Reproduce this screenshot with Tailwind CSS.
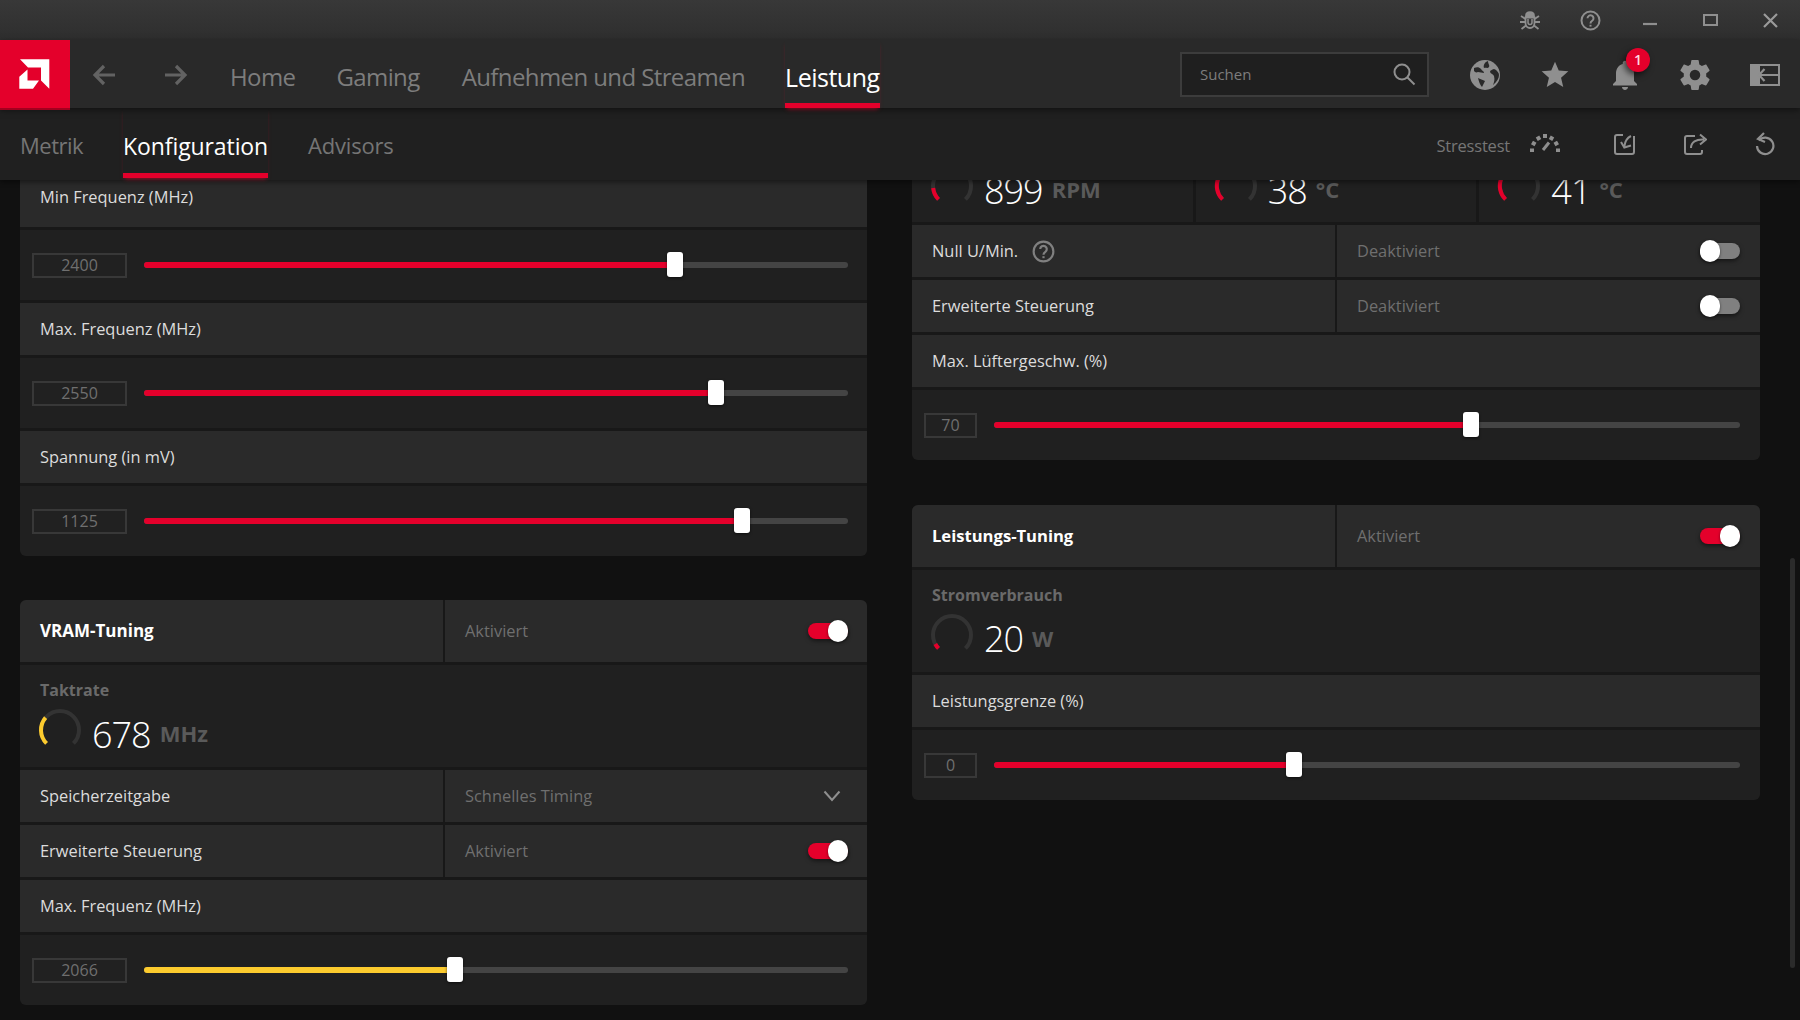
<!DOCTYPE html>
<html lang="de">
<head>
<meta charset="utf-8">
<script src="https://cdn.jsdelivr.net/npm/@tailwindcss/browser@4"></script>
<title>Leistung</title>
</head>
<body class="m-0 bg-[#111111]">
<div class="w-[1800px] h-[1020px] overflow-hidden flex flex-col font-['Open_Sans',sans-serif] text-[#dcdcdc]">

  <!-- title bar -->
  <div class="h-[40px] shrink-0 flex justify-end bg-gradient-to-b from-[#383838] to-[#2e2e2e] text-[#8f8f8f]">
    <div class="w-[60px] flex items-center justify-center">
      <svg width="22" height="22" viewBox="0 0 22 22" fill="none" stroke="#8f8f8f" stroke-width="1.8"><path d="M7 7c0-5 8-5 8 0z" fill="#8f8f8f"/><path d="M6.500 8.500h9v5.500a4.500 5 0 0 1-9 0z"/><path d="M9 10v3.500a2 2 0 0 0 4 0V10" stroke-width="1.5"/><path d="M2 7l4.500 3M20 7l-4.500 3M1 13h5.500M21 13h-5.500M2.500 20l4.500-3.500M19.500 20L15 16.500"/></svg>
    </div>
    <div class="w-[60px] flex items-center justify-center">
      <svg width="21" height="21" viewBox="0 0 21 21" fill="none" stroke="#8f8f8f" stroke-width="2"><circle cx="10.500" cy="10.500" r="9"/><path d="M7.500 8.300a3 3 0 1 1 4.700 2.500c-1.200.8-1.700 1.300-1.700 2.600"/><path d="M10.500 14.800v1.800"/></svg>
    </div>
    <div class="w-[60px] flex items-center justify-center">
      <svg width="16" height="14" viewBox="0 0 16 14" class="translate-y-[1px]"><path d="M1 10h14" stroke="#8f8f8f" stroke-width="2.200"/></svg>
    </div>
    <div class="w-[60px] flex items-center justify-center">
      <div class="w-[15px] h-[12px] border-2 border-[#8f8f8f]"></div>
    </div>
    <div class="w-[60px] flex items-center justify-center">
      <svg width="15" height="15" viewBox="0 0 15 15"><path d="M1 1l13 13M14 1L1 14" stroke="#9a9a9a" stroke-width="2.200"/></svg>
    </div>
  </div>

  <!-- main nav -->
  <div class="h-[68px] shrink-0 flex bg-[#292929] relative z-30 shadow-[0_2px_6px_rgba(0,0,0,0.5)]">
    <div class="w-[70px] h-[70px] shrink-0 bg-[#e4002b] border-b-2 border-[#a3001f] relative z-10">
      <svg width="70" height="68" viewBox="0 0 70 68" class="block"><path d="M20 23.300h29.300v29.400L41 44.500V31.500H28zM19.300 40.700l8.200-7.200v11H39l-6 8.200H19.300z" fill="#fff" transform="translate(0 -4)"/></svg>
    </div>
    <svg width="24" height="24" viewBox="0 0 24 24" fill="none" stroke="#626262" stroke-width="3.200" class="ml-[22px] mt-[23px]"><path d="M23 12H3M12 3l-9 9 9 9"/></svg>
    <svg width="24" height="24" viewBox="0 0 24 24" fill="none" stroke="#626262" stroke-width="3.200" class="ml-[48px] mt-[23px]"><path d="M1 12h20M12 3l9 9-9 9"/></svg>
    <div class="ml-[42px] flex h-full text-[24px] text-[#7d7d7d] tracking-[-0.6px]">
      <div class="flex items-center pt-[10px] border-b-[5px] border-transparent">Home</div>
      <div class="ml-[41px] flex items-center pt-[10px] border-b-[5px] border-transparent">Gaming</div>
      <div class="ml-[42px] flex items-center pt-[10px] border-b-[5px] border-transparent">Aufnehmen und Streamen</div>
      <div class="ml-[40px] flex items-center pt-[13px] border-b-[5px] border-[#e4002b] text-white font-medium text-[25px] tracking-[-0.5px] shadow-[0_3px_4px_-2px_rgba(228,0,43,0.6)]">Leistung</div>
    </div>
    <div class="ml-auto flex items-center">
      <div class="w-[249px] h-[45px] mr-[21px] border-2 border-[#3c3c3c] bg-[#1f1f1f] flex items-center justify-between pl-[18px] pr-[11px] text-[15px] text-[#7d7d7d]">
        <span>Suchen</span>
        <svg width="24" height="24" viewBox="0 0 24 24" fill="none" stroke="#8f8f8f" stroke-width="2"><circle cx="10" cy="10" r="7.500"/><path d="M15.500 15.500L22.500 22.500"/></svg>
      </div>
      <div class="w-[70px] flex justify-center pt-[2px]">
        <svg width="32" height="32" viewBox="0 0 32 32"><circle cx="16" cy="16" r="15" fill="#8f8f8f"/><path d="M5 9c3-1 5-1 7 1 1 2 3 2 3 4-2 0-4-1-6-1-2 1-3 0-4-1zM19 2c0 3 2 4 1 6-2 2-3 0-5 1-1-3 1-6 4-7zM25 10c-2 1-4 1-4 3 1 2 3 2 4 4 1 4 0 6-1 9 4-3 6-7 6-10 0-2-2-5-5-6zM13 28l3-6c-2-1-5-2-7-3 1 4 2 7 4 9z" fill="#292929"/></svg>
      </div>
      <div class="w-[70px] flex justify-center pt-[2px]">
        <svg width="32" height="32" viewBox="0 0 24 24"><path d="M12 17.270L18.180 21l-1.640-7.030L22 9.240l-7.190-.610L12 2 9.190 8.630 2 9.240l5.460 4.730L5.820 21z" fill="#8f8f8f"/></svg>
      </div>
      <div class="w-[70px] flex justify-center relative pt-[2px]">
        <svg width="36" height="36" viewBox="0 0 24 24"><path d="M12 22c1.100 0 2-.9 2-2h-4c0 1.100.9 2 2 2zm6-6v-5c0-3.070-1.630-5.640-4.500-6.320V4c0-.83-.67-1.500-1.500-1.500s-1.500.67-1.500 1.500v.68C7.640 5.360 6 7.920 6 11v5l-2 2v1h16v-1l-2-2z" fill="#8f8f8f"/></svg>
        <div class="absolute left-[36px] top-[-7px] w-[24px] h-[24px] rounded-full bg-[#e4002b] shadow-[-2px_3px_6px_rgba(0,0,0,0.6)] flex items-center justify-center text-[14px] leading-none font-semibold text-[#ffd9e0]">1</div>
      </div>
      <div class="w-[70px] flex justify-center pt-[2px]">
        <svg width="36" height="36" viewBox="0 0 24 24"><path d="M12 15.500A3.500 3.500 0 0 1 8.500 12 3.500 3.500 0 0 1 12 8.500a3.500 3.500 0 0 1 3.500 3.500 3.500 3.500 0 0 1-3.500 3.500m7.430-2.530c.04-.32.07-.64.07-.97 0-.33-.03-.66-.07-1l2.110-1.630c.19-.15.24-.42.12-.64l-2-3.460c-.12-.22-.39-.31-.61-.22l-2.490 1c-.52-.39-1.060-.73-1.690-.98l-.37-2.650A.506.506 0 0 0 14 2h-4c-.25 0-.46.18-.5.42l-.37 2.650c-.63.25-1.170.59-1.690.98l-2.490-1c-.22-.09-.49 0-.61.22l-2 3.460c-.13.22-.07.49.12.64L4.570 11c-.04.34-.07.67-.07 1 0 .33.03.65.07.97l-2.110 1.660c-.19.15-.25.42-.12.64l2 3.460c.12.22.39.3.61.22l2.490-1.010c.52.4 1.060.74 1.690.99l.37 2.650c.04.24.25.42.5.42h4c.25 0 .46-.18.5-.42l.37-2.650c.63-.26 1.170-.59 1.690-.99l2.490 1.010c.22.08.49 0 .61-.22l2-3.460c.12-.22.07-.49-.12-.64l-2.110-1.660z" fill="#8f8f8f"/></svg>
      </div>
      <div class="w-[70px] flex justify-center pt-[2px]">
        <svg width="30" height="22" viewBox="0 0 30 22"><path d="M0 0h30v22H0z" fill="#8f8f8f"/><path d="M10 2h18v18H10z" fill="#292929"/><path d="M14.500 5l-5.500 6 5.500 6M9.500 11H30" fill="none" stroke="#8f8f8f" stroke-width="2.200"/></svg>
      </div>
    </div>
  </div>

  <!-- sub nav -->
  <div class="h-[72px] shrink-0 flex bg-[#202020] relative z-20 shadow-[0_2px_5px_rgba(0,0,0,0.45)]">
    <div class="ml-[20px] flex h-[70px] text-[22px] text-[#757575] tracking-[-0.5px]">
      <div class="flex items-center pt-[9px] border-b-[5px] border-transparent">Metrik</div>
      <div class="ml-[40px] flex items-center pt-[12px] border-b-[5px] border-[#e4002b] text-white font-medium text-[23px] tracking-[-0.1px] shadow-[0_3px_4px_-2px_rgba(228,0,43,0.6)]">Konfiguration</div>
      <div class="ml-[40px] flex items-center pt-[9px] border-b-[5px] border-transparent tracking-[-0.2px]">Advisors</div>
    </div>
    <div class="ml-auto flex items-center text-[#767676]">
      <span class="text-[16.5px] tracking-[-0.2px] pt-[5px]">Stresstest</span>
      <div class="w-[70px] mr-[10px] flex justify-center mb-[5px]">
        <svg width="32" height="20" viewBox="0 0 32 20" fill="none" stroke="#8f8f8f" stroke-width="4"><path d="M1 18.500h4M27 18.500h4M3 10.500l3.500 2M29 10.500l-3.500 2M8.500 4.500l2 3.500M16 2v4M23.500 4.500l-2 3.500" /><path d="M14 18l6-7.500" stroke-width="3"/></svg>
      </div>
      <div class="w-[70px] flex justify-center">
        <svg width="22" height="24" viewBox="0 0 22 24" fill="none" stroke="#8f8f8f" stroke-width="2"><path d="M9 3H3a2 2 0 0 0-2 2v15a2 2 0 0 0 2 2h15a2 2 0 0 0 2-2V4"/><path d="M17 4c-4 2-6 5-6.500 10M7 10l3.300 5.500 6.700-2"/></svg>
      </div>
      <div class="w-[70px] flex justify-center">
        <svg width="24" height="24" viewBox="0 0 24 24" fill="none" stroke="#8f8f8f" stroke-width="2"><path d="M12 4H4a2 2 0 0 0-2 2v14a2 2 0 0 0 2 2h13a2 2 0 0 0 2-2v-2"/><path d="M8 16c0-6 5-9 13-8.500M17 2.500l6 5-6 5" /></svg>
      </div>
      <div class="w-[70px] flex justify-center">
        <svg width="22" height="24" viewBox="0 0 22 24" fill="none" stroke="#8f8f8f" stroke-width="2.200"><path d="M5 8.500A8.200 8.200 0 1 1 3 14"/><path d="M10 1L4 7l7 3"/></svg>
      </div>
    </div>
  </div>

  <!-- content -->
  <div class="flex-1 relative overflow-hidden bg-[#111111] flex items-start">

    <!-- left column -->
    <div class="ml-[20px] w-[847px] -mt-[10px] flex flex-col gap-[44px]">
      <div class="flex flex-col gap-[3px] bg-[#181818] rounded-b-[6px]">
        <div class="h-[57px] bg-[#2a2a2a] flex items-center pl-[20px] pb-[2px] text-[16.4px]"><span>Min Frequenz (MHz)</span></div>
        <div class="h-[70px] bg-[#202020] flex items-center pl-[12px] pr-[19px]">
          <div class="w-[95px] h-[25px] shrink-0 border-2 border-[#383838] bg-[#212121] flex items-center justify-center text-[16px] text-[#6f6f6f]">2400</div>
          <div class="ml-[17px] flex-1 h-[6px] bg-[#444444] rounded-full relative">
            <div class="h-full bg-[#e4002b] rounded-l-full" style="width:75.4%"></div>
            <div class="absolute top-[-10px] w-[16px] h-[25px] -ml-[8px] bg-white rounded-[3px] shadow-[0_1px_3px_rgba(0,0,0,0.6)]" style="left:75.4%"></div>
          </div>
        </div>
        <div class="h-[52px] bg-[#2a2a2a] flex items-center pl-[20px] text-[16.4px]"><span>Max. Frequenz (MHz)</span></div>
        <div class="h-[70px] bg-[#202020] flex items-center pl-[12px] pr-[19px]">
          <div class="w-[95px] h-[25px] shrink-0 border-2 border-[#383838] bg-[#212121] flex items-center justify-center text-[16px] text-[#6f6f6f]">2550</div>
          <div class="ml-[17px] flex-1 h-[6px] bg-[#444444] rounded-full relative">
            <div class="h-full bg-[#e4002b] rounded-l-full" style="width:81.2%"></div>
            <div class="absolute top-[-10px] w-[16px] h-[25px] -ml-[8px] bg-white rounded-[3px] shadow-[0_1px_3px_rgba(0,0,0,0.6)]" style="left:81.2%"></div>
          </div>
        </div>
        <div class="h-[52px] bg-[#2a2a2a] flex items-center pl-[20px] text-[16.4px]"><span>Spannung (in mV)</span></div>
        <div class="h-[70px] bg-[#202020] rounded-b-[6px] flex items-center pl-[12px] pr-[19px]">
          <div class="w-[95px] h-[25px] shrink-0 border-2 border-[#383838] bg-[#212121] flex items-center justify-center text-[16px] text-[#6f6f6f]">1125</div>
          <div class="ml-[17px] flex-1 h-[6px] bg-[#444444] rounded-full relative">
            <div class="h-full bg-[#e4002b] rounded-l-full" style="width:84.9%"></div>
            <div class="absolute top-[-10px] w-[16px] h-[25px] -ml-[8px] bg-white rounded-[3px] shadow-[0_1px_3px_rgba(0,0,0,0.6)]" style="left:84.9%"></div>
          </div>
        </div>
      </div>

      <div class="flex flex-col gap-[3px] bg-[#181818] rounded-[6px]">
        <div class="h-[62px] flex gap-[2px] rounded-t-[6px] overflow-hidden">
          <div class="w-[423px] bg-[#2a2a2a] flex items-center pl-[20px] text-[17px] font-bold text-white">VRAM-Tuning</div>
          <div class="flex-1 bg-[#2a2a2a] flex items-center justify-between pl-[20px] pr-[19px] text-[16.4px] text-[#6f6f6f]">
            <span>Aktiviert</span>
            <div class="w-[40px] h-[16px] rounded-full bg-[#e4002b] relative shadow-[0_2px_4px_rgba(0,0,0,0.5)]"><div class="absolute right-0 top-[-3px] w-[20px] h-[22px] rounded-full bg-white shadow-[0_1px_3px_rgba(0,0,0,0.5)]"></div></div>
          </div>
        </div>
        <div class="h-[102px] bg-[#202020] pl-[20px] pt-[14px]">
          <div class="text-[16px] font-bold text-[#6a6a6a] leading-[22px]">Taktrate</div>
          <div class="flex items-center -ml-[2px] mt-[7px] h-[44px]">
            <svg width="44" height="44" viewBox="0 0 44 44" fill="none" stroke-width="4"><path d="M8.560 35.440A19 19 0 1 1 35.440 35.440" stroke="#333333"/><path d="M8.560 35.440A19 19 0 0 1 7.600 9.600" stroke="#fccb2e"/></svg>
            <span class="ml-[10px] text-[36px] font-light text-white tracking-[-1px] leading-[44px] pt-[10px]">678</span>
            <span class="ml-[9px] text-[22px] font-bold text-[#5a5a5a] pt-[6px]">MHz</span>
          </div>
        </div>
        <div class="h-[52px] flex gap-[2px]">
          <div class="w-[423px] bg-[#2a2a2a] flex items-center pl-[20px] text-[16.4px]">Speicherzeitgabe</div>
          <div class="flex-1 bg-[#2a2a2a] flex items-center justify-between pl-[20px] pr-[26px] text-[16.4px] text-[#6f6f6f]">
            <span>Schnelles Timing</span>
            <svg width="18" height="12" viewBox="0 0 18 12" fill="none" stroke="#8f8f8f" stroke-width="2"><path d="M1.500 1.500L9 10l7.500-8.500"/></svg>
          </div>
        </div>
        <div class="h-[52px] flex gap-[2px]">
          <div class="w-[423px] bg-[#2a2a2a] flex items-center pl-[20px] text-[16.4px]">Erweiterte Steuerung</div>
          <div class="flex-1 bg-[#2a2a2a] flex items-center justify-between pl-[20px] pr-[19px] text-[16.4px] text-[#6f6f6f]">
            <span>Aktiviert</span>
            <div class="w-[40px] h-[16px] rounded-full bg-[#e4002b] relative shadow-[0_2px_4px_rgba(0,0,0,0.5)]"><div class="absolute right-0 top-[-3px] w-[20px] h-[22px] rounded-full bg-white shadow-[0_1px_3px_rgba(0,0,0,0.5)]"></div></div>
          </div>
        </div>
        <div class="h-[52px] bg-[#2a2a2a] flex items-center pl-[20px] text-[16.4px]"><span>Max. Frequenz (MHz)</span></div>
        <div class="h-[70px] bg-[#202020] rounded-b-[6px] flex items-center pl-[12px] pr-[19px]">
          <div class="w-[95px] h-[25px] shrink-0 border-2 border-[#383838] bg-[#212121] flex items-center justify-center text-[16px] text-[#6f6f6f]">2066</div>
          <div class="ml-[17px] flex-1 h-[6px] bg-[#444444] rounded-full relative">
            <div class="h-full bg-[#fccb2e] rounded-l-full" style="width:44.2%"></div>
            <div class="absolute top-[-10px] w-[16px] h-[25px] -ml-[8px] bg-white rounded-[3px] shadow-[0_1px_3px_rgba(0,0,0,0.6)]" style="left:44.2%"></div>
          </div>
        </div>
      </div>
    </div>

    <!-- right column -->
    <div class="ml-[45px] w-[848px] -mt-[60px] flex flex-col gap-[45px]">
      <div class="flex flex-col gap-[3px] bg-[#181818] rounded-b-[6px]">
        <div class="h-[102px] flex gap-[3px]">
          <div class="flex-1 bg-[#202020] flex items-center h-[102px] pt-[30px] pl-[18px]">
            <svg width="44" height="44" viewBox="0 0 44 44" fill="none" stroke-width="4"><path d="M8.560 35.440A19 19 0 1 1 35.440 35.440" stroke="#333333"/><path d="M8.560 35.440A19 19 0 0 1 3.200 24" stroke="#e4002b"/></svg>
            <span class="ml-[10px] text-[36px] font-light text-white tracking-[-1px] leading-[44px] pt-[10px]">899</span>
            <span class="ml-[9px] text-[22px] font-bold text-[#5a5a5a] pt-[6px]">RPM</span>
          </div>
          <div class="flex-1 bg-[#202020] flex items-center h-[102px] pt-[30px] pl-[18px]">
            <svg width="44" height="44" viewBox="0 0 44 44" fill="none" stroke-width="4"><path d="M8.560 35.440A19 19 0 1 1 35.440 35.440" stroke="#333333"/><path d="M8.560 35.440A19 19 0 0 1 4.500 14" stroke="#e4002b"/></svg>
            <span class="ml-[10px] text-[36px] font-light text-white tracking-[-1px] leading-[44px] pt-[10px]">38</span>
            <span class="ml-[9px] text-[22px] font-bold text-[#5a5a5a] pt-[6px]">°C</span>
          </div>
          <div class="flex-1 bg-[#202020] flex items-center h-[102px] pt-[30px] pl-[18px]">
            <svg width="44" height="44" viewBox="0 0 44 44" fill="none" stroke-width="4"><path d="M8.560 35.440A19 19 0 1 1 35.440 35.440" stroke="#333333"/><path d="M8.560 35.440A19 19 0 0 1 4.500 14" stroke="#e4002b"/></svg>
            <span class="ml-[10px] text-[36px] font-light text-white tracking-[-1px] leading-[44px] pt-[10px]">41</span>
            <span class="ml-[9px] text-[22px] font-bold text-[#5a5a5a] pt-[6px]">°C</span>
          </div>
        </div>
        <div class="h-[52px] flex gap-[2px]">
          <div class="w-[423px] bg-[#2a2a2a] flex items-center pl-[20px] text-[16.4px]"><span>Null U/Min.</span>
            <svg width="23" height="23" viewBox="0 0 21 21" fill="none" stroke="#808080" stroke-width="2" class="ml-[14px]"><circle cx="10.500" cy="10.500" r="9"/><path d="M7.500 8.300a3 3 0 1 1 4.700 2.500c-1.200.8-1.700 1.300-1.700 2.600"/><path d="M10.500 14.800v1.800"/></svg>
          </div>
          <div class="flex-1 bg-[#2a2a2a] flex items-center justify-between pl-[20px] pr-[20px] text-[16.4px] text-[#6f6f6f]">
            <span>Deaktiviert</span>
            <div class="w-[40px] h-[16px] rounded-full bg-[#808080] relative shadow-[0_2px_4px_rgba(0,0,0,0.5)]"><div class="absolute left-0 top-[-3px] w-[20px] h-[22px] rounded-full bg-white shadow-[0_1px_3px_rgba(0,0,0,0.5)]"></div></div>
          </div>
        </div>
        <div class="h-[52px] flex gap-[2px]">
          <div class="w-[423px] bg-[#2a2a2a] flex items-center pl-[20px] text-[16.4px]">Erweiterte Steuerung</div>
          <div class="flex-1 bg-[#2a2a2a] flex items-center justify-between pl-[20px] pr-[20px] text-[16.4px] text-[#6f6f6f]">
            <span>Deaktiviert</span>
            <div class="w-[40px] h-[16px] rounded-full bg-[#808080] relative shadow-[0_2px_4px_rgba(0,0,0,0.5)]"><div class="absolute left-0 top-[-3px] w-[20px] h-[22px] rounded-full bg-white shadow-[0_1px_3px_rgba(0,0,0,0.5)]"></div></div>
          </div>
        </div>
        <div class="h-[52px] bg-[#2a2a2a] flex items-center pl-[20px] text-[16.4px]"><span>Max. Lüftergeschw. (%)</span></div>
        <div class="h-[70px] bg-[#202020] rounded-b-[6px] flex items-center pl-[12px] pr-[20px]">
          <div class="w-[53px] h-[25px] shrink-0 border-2 border-[#383838] bg-[#212121] flex items-center justify-center text-[16px] text-[#6f6f6f]">70</div>
          <div class="ml-[17px] flex-1 h-[6px] bg-[#444444] rounded-full relative">
            <div class="h-full bg-[#e4002b] rounded-l-full" style="width:63.9%"></div>
            <div class="absolute top-[-10px] w-[16px] h-[25px] -ml-[8px] bg-white rounded-[3px] shadow-[0_1px_3px_rgba(0,0,0,0.6)]" style="left:63.9%"></div>
          </div>
        </div>
      </div>

      <div class="flex flex-col gap-[3px] bg-[#181818] rounded-[6px]">
        <div class="h-[62px] flex gap-[2px] rounded-t-[6px] overflow-hidden">
          <div class="w-[423px] bg-[#2a2a2a] flex items-center pl-[20px] text-[16.6px] font-bold text-white">Leistungs-Tuning</div>
          <div class="flex-1 bg-[#2a2a2a] flex items-center justify-between pl-[20px] pr-[20px] text-[16.4px] text-[#6f6f6f]">
            <span>Aktiviert</span>
            <div class="w-[40px] h-[16px] rounded-full bg-[#e4002b] relative shadow-[0_2px_4px_rgba(0,0,0,0.5)]"><div class="absolute right-0 top-[-3px] w-[20px] h-[22px] rounded-full bg-white shadow-[0_1px_3px_rgba(0,0,0,0.5)]"></div></div>
          </div>
        </div>
        <div class="h-[102px] bg-[#202020] pl-[20px] pt-[14px]">
          <div class="text-[16px] font-bold text-[#6a6a6a] leading-[22px]">Stromverbrauch</div>
          <div class="flex items-center -ml-[2px] mt-[7px] h-[44px]">
            <svg width="44" height="44" viewBox="0 0 44 44" fill="none" stroke-width="4"><path d="M8.560 35.440A19 19 0 1 1 35.440 35.440" stroke="#333333"/><path d="M8.560 35.440A19 19 0 0 1 5.300 31" stroke="#e4002b"/></svg>
            <span class="ml-[10px] text-[36px] font-light text-white tracking-[-1px] leading-[44px] pt-[8px]">20</span>
            <span class="ml-[9px] text-[22px] font-bold text-[#5a5a5a] pt-[6px]">W</span>
          </div>
        </div>
        <div class="h-[52px] bg-[#2a2a2a] flex items-center pl-[20px] text-[16.4px]"><span>Leistungsgrenze (%)</span></div>
        <div class="h-[70px] bg-[#202020] rounded-b-[6px] flex items-center pl-[12px] pr-[20px]">
          <div class="w-[53px] h-[25px] shrink-0 border-2 border-[#383838] bg-[#212121] flex items-center justify-center text-[16px] text-[#6f6f6f]">0</div>
          <div class="ml-[17px] flex-1 h-[6px] bg-[#444444] rounded-full relative">
            <div class="h-full bg-[#e4002b] rounded-l-full" style="width:40.2%"></div>
            <div class="absolute top-[-10px] w-[16px] h-[25px] -ml-[8px] bg-white rounded-[3px] shadow-[0_1px_3px_rgba(0,0,0,0.6)]" style="left:40.2%"></div>
          </div>
        </div>
      </div>
    </div>

    <!-- scrollbar -->
    <div class="absolute left-[1790px] top-[378px] w-[5px] h-[410px] rounded-full bg-[#2b2b2b]"></div>
  </div>
</div>
</body>
</html>
